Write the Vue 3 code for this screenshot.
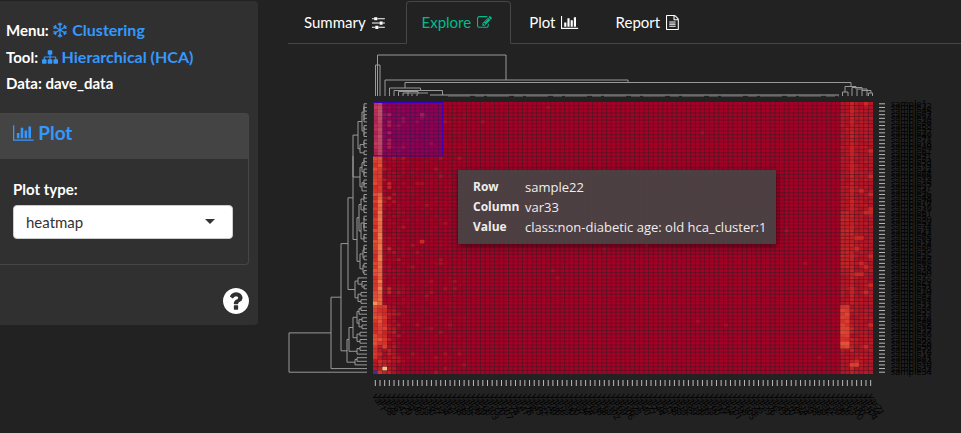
<script setup>
import { ref } from 'vue'

const icons = {
  bars: { box: '0 0 2048 1792', d: 'M640 896v512H384V896h256zm384-512v1024H768V384h256zm1024 1152v128H0V128h128v1408h1920zm-640-896v768h-256V640h256zm384-384v1152h-256V256h256z' },
  edit: { box: '0 0 1792 1792', d: 'M888 1184l116-116-152-152-116 116v56h96v96h56zm440-720q-16-16-33 1l-350 350q-17 17-1 33t33-1l350-350q17-17 1-33zm80 594v190q0 119-84.5 203.5t-203.5 84.5h-832q-119 0-203.5-84.5t-84.5-203.5v-832q0-119 84.5-203.5t203.5-84.5h832q63 0 117 25 15 7 18 23 3 17-9 29l-49 49q-14 14-32 8-23-6-45-6h-832q-66 0-113 47t-47 113v832q0 66 47 113t113 47h832q66 0 113-47t47-113v-126q0-13 9-22l64-64q15-15 35-7t20 29zm-96-738l288 288-672 672h-288v-288zm444 132l-92 92-288-288 92-92q28-28 68-28t68 28l152 152q28 28 28 68t-28 68z' },
  file: { box: '128 0 1536 1792', d: 'M1596 380q28 28 48 76t20 88v1152q0 40-28 68t-68 28h-1344q-40 0-68-28t-28-68v-1600q0-40 28-68t68-28h896q40 0 88 20t76 48zm-444-244v376h376q-10-29-22-41l-313-313q-12-12-41-22zm384 1528v-1024h-416q-40 0-68-28t-28-68v-416h-768v1536h1280zm-1024-864q0-14 9-23t23-9h704q14 0 23 9t9 23v64q0 14-9 23t-23 9h-704q-14 0-23-9t-9-23v-64zm736 224q14 0 23 9t9 23v64q0 14-9 23t-23 9h-704q-14 0-23-9t-9-23v-64q0-14 9-23t23-9h704zm0 256q14 0 23 9t9 23v64q0 14-9 23t-23 9h-704q-14 0-23-9t-9-23v-64q0-14 9-23t23-9h704z' },
  sliders: { box: '128 0 1536 1792', d: 'M480 1408v128h-352v-128h352zm352-128q26 0 45 19t19 45v256q0 26-19 45t-45 19h-256q-26 0-45-19t-19-45v-256q0-26 19-45t45-19h256zm160-384v128h-864v-128h864zm-640-512v128h-224v-128h224zm1312 1024v128h-736v-128h736zm-960-1152q26 0 45 19t19 45v256q0 26-19 45t-45 19h-256q-26 0-45-19t-19-45v-256q0-26 19-45t45-19h256zm640 512q26 0 45 19t19 45v256q0 26-19 45t-45 19h-256q-26 0-45-19t-19-45v-256q0-26 19-45t45-19h256zm320 128v128h-224v-128h224zm0-512v128h-864v-128h864z' },
  sitemap: { box: '0 0 1792 1792', d: 'M1792 1248v320q0 40-28 68t-68 28h-320q-40 0-68-28t-28-68v-320q0-40 28-68t68-28h96v-192h-512v192h96q40 0 68 28t28 68v320q0 40-28 68t-68 28h-320q-40 0-68-28t-28-68v-320q0-40 28-68t68-28h96v-192h-512v192h96q40 0 68 28t28 68v320q0 40-28 68t-68 28h-320q-40 0-68-28t-28-68v-320q0-40 28-68t68-28h96v-192q0-52 38-90t90-38h512v-192h-96q-40 0-68-28t-28-68v-320q0-40 28-68t68-28h320q40 0 68 28t28 68v320q0 40-28 68t-68 28h-96v192h512q52 0 90 38t38 90v192h96q40 0 68 28t28 68z' },
  help: { box: '128 128 1536 1536', d: 'M1024 1376v-192q0-14-9-23t-23-9h-192q-14 0-23 9t-9 23v192q0 14 9 23t23 9h192q14 0 23-9t9-23zm256-672q0-88-55.5-163t-138.5-116-170-41q-243 0-371 213-15 24 8 42l132 100q7 6 19 6 16 0 25-12 53-68 86-92 34-24 86-24 48 0 85.5 26t37.5 59q0 38-20 61t-68 45q-63 28-115.5 86.5t-52.5 125.5v36q0 14 9 23t23 9h192q14 0 23-9t9-23q0-19 21.5-49.5t54.5-49.5q32-18 49-28.5t46-35 44.5-48 28-60.5 12.5-81zm384 192q0 209-103 385.5t-279.5 279.5-385.5 103-385.5-103-279.5-279.5-103-385.5 103-385.5 279.5-279.5 385.5-103 385.5 103 279.5 279.5 103 385.5z' }
}

const tabs = [
  { name: 'Summary', icon: 'sliders' },
  { name: 'Explore', icon: 'edit' },
  { name: 'Plot', icon: 'bars' },
  { name: 'Report', icon: 'file' }
]
const active = ref('Explore')
const plotType = ref('heatmap')

// Heatmap geometry, in plot units
const COLS = 107
const ROWS = 75
const X0 = 85
const Y0 = 58
const W = 500
const H = 272
const cw = W / COLS
const ch = H / ROWS
const colX = i => X0 + (i + 0.5) * cw
const rowY = i => Y0 + (i + 0.5) * ch

let seed = 17
const rnd = () => {
  seed = (seed + 0x6d2b79f5) | 0
  let t = Math.imul(seed ^ (seed >>> 15), 1 | seed)
  t = (t + Math.imul(t ^ (t >>> 7), 61 | t)) ^ t
  return ((t ^ (t >>> 14)) >>> 0) / 4294967296
}

const stops = [[165, 0, 38], [215, 48, 39], [244, 109, 67], [253, 174, 97], [254, 224, 144]]
function shade(t) {
  const p = Math.min(3.999, t * 4)
  const i = Math.floor(p)
  const f = p - i
  return `rgb(${stops[i].map((c, k) => Math.round(c + (stops[i + 1][k] - c) * f)).join(',')})`
}

function intensity(r, c) {
  const n = rnd()
  if (c === 0) return r > 70 ? 0.12 : 0.24 + n * 0.2
  if (c === 1) {
    if (r < 15) return 0.42 + n * 0.12
    if (r < 25) return 0.3 + n * 0.14
    if (r < 56) return 0.48 + n * 0.18
    return r < 66 ? 0.28 + n * 0.18 : 0.12 + n * 0.2
  }
  if (c >= 100) {
    if (c < 102) {
      if (r >= 56 && r < 68) return 0.26 + n * 0.14
      return r > 29 && r < 46 ? 0.16 + n * 0.04 : 0.08 + n * 0.05
    }
    if (c === 102) return r < 56 ? 0.16 + n * 0.06 : 0.06 + n * 0.14
    return n > 0.92 ? 0.24 : 0.08 + n * 0.06
  }
  if (r >= 56 && c < 5) return c === 2 && r < 68 ? 0.2 + n * 0.16 : 0.05 + n * 0.12
  if (c === 3) return n > 0.8 ? 0.18 : n * 0.06
  if (c < 7) return n > 0.92 ? 0.09 : n * 0.04
  if (c < 20) return n > 0.96 ? 0.07 : n * 0.02
  return n > 0.998 ? 0.05 : 0
}

const special = { '74-0': '#313695', '73-2': '#fee090', '55-0': '#fdae61', '72-102': '#e34f36', '72-103': '#e34f36', '66-100': '#f0603c', '66-101': '#f0603c', '3-10': '#c5272a', '38-10': '#d73027' }
const cells = []
const hotCells = []
for (let r = 0; r < ROWS; r++) {
  for (let c = 0; c < COLS; c++) {
    const t = intensity(r, c)
    const mark = special[`${r}-${c}`]
    const fill = mark || (t > 0.015 ? shade(t) : null)
    if (fill) (mark || t > 0.2 ? hotCells : cells).push({ key: `${r}-${c}`, x: X0 + c * cw, y: Y0 + r * ch, fill })
  }
}

let grid = ''
for (let c = 1; c < COLS; c++) grid += `M${(X0 + c * cw).toFixed(1)} ${Y0}v${H}`
for (let r = 1; r < ROWS; r++) grid += `M${X0} ${(Y0 + r * ch).toFixed(1)}h${W}`

// Row dendrogram: every join returns its own centre line
const LEAF = 79
let rowTree = ''
function join(x, a, b) {
  rowTree += `M${a.x} ${a.y.toFixed(1)}H${x}V${b.y.toFixed(1)}H${b.x}`
  return { x, y: (a.y + b.y) / 2 }
}
const leaf = i => ({ x: LEAF, y: rowY(i) })
function branch(lo, hi, x) {
  if (lo === hi) return leaf(lo)
  const n = hi - lo
  const cut = lo + Math.min(n - 1, Math.floor(n * (0.3 + rnd() * 0.4)))
  const next = Math.min(LEAF - 3, x + 2 + Math.round(rnd() * 2))
  return join(x, branch(lo, cut, next), branch(cut + 1, hi, next))
}
const upper = join(65, join(70, branch(0, 9, 74), branch(10, 14, 72)), branch(15, 24, 72))
const middle = join(69, branch(25, 38, 71), branch(39, 47, 72))
const large = join(60, join(65, upper, middle), branch(48, 55, 67))
const lower = join(59, join(61, branch(56, 66, 65), branch(67, 69, 69)), branch(70, 72, 67))
join(1, join(43, join(53, large, lower), leaf(73)), leaf(74))

const columnTree = 'M89.5 52V11H218V36M87.5 52V21H92V52M97 52V36H340V38M117 44V38.500H563V42' +
  'M101.500 52V44H132.500V46M106 52V46.500H154.500V51M110.500 52V47.500H130V50M115 52V49H140M120 52V48M124 52V50M129 52V50' +
  'M557 48V42.500H568V45M554.500 52V48H560V52M564 52V43.500H574V52M569 52V45H579V52M574 46.500H583V49M580.500 52V49H584.500V52'

const colTicks = Array.from({ length: COLS }, (_, i) => ({ x: colX(i), label: `var${((i * 37) % COLS) + 1}` }))
const rowTicks = Array.from({ length: ROWS }, (_, i) => ({ y: rowY(i), label: `sample${((i * 22) % ROWS) + 1}` }))
</script>

<template>
  <div class="page">
    <aside class="sidebar">
      <div class="crumbs">
        <p>Menu:
          <a href="#"><svg class="icon" viewBox="0 0 16 16" fill="none" stroke="currentColor" stroke-width="1.3" aria-hidden="true">
            <g v-for="a in [0, 60, 120, 180, 240, 300]" :key="a" :transform="`rotate(${a} 8 8)`"><path d="M8 8V.5M6 1.500L8 3.500l2-2" /></g>
          </svg> Clustering</a>
        </p>
        <p>Tool:
          <a href="#"><svg class="icon" :viewBox="icons.sitemap.box" aria-hidden="true"><path :d="icons.sitemap.d" /></svg> Hierarchical (HCA)</a>
        </p>
        <p>Data: dave_data</p>
      </div>
      <section class="panel">
        <h2><a href="#"><svg class="icon" :viewBox="icons.bars.box" aria-hidden="true"><path :d="icons.bars.d" /></svg> Plot</a></h2>
        <div class="panel-body">
          <label for="plot-type">Plot type:</label>
          <div class="select">
            <select id="plot-type" v-model="plotType">
              <option>heatmap</option>
              <option>dendrogram</option>
            </select>
            <span class="caret"></span>
          </div>
        </div>
      </section>
      <button class="help" type="button" aria-label="Help">
        <svg :viewBox="icons.help.box" aria-hidden="true"><path :d="icons.help.d" /></svg>
      </button>
    </aside>

    <main>
      <nav class="tabs">
        <a v-for="t in tabs" :key="t.name" href="#" :class="{ active: t.name === active }" @click.prevent="active = t.name">
          <span>{{ t.name }}</span>
          <svg class="icon" :viewBox="icons[t.icon].box" aria-hidden="true"><path :d="icons[t.icon].d" /></svg>
        </a>
      </nav>
      <div class="plot">
        <svg class="chart" viewBox="0 0 673 389">
          <path class="tree" :d="columnTree" />
          <path class="fringe" d="M142 51H551" />
          <path class="fringe dim" d="M160 52H551" />
          <path class="tree" :d="rowTree" />
          <rect :x="X0" :y="Y0" :width="W" :height="H" fill="#a50026" />
          <rect v-for="c in cells" :key="c.key" :x="c.x" :y="c.y" :width="cw" :height="ch" :fill="c.fill" />
          <path class="grid" :d="grid" />
          <g class="hot">
            <rect v-for="c in hotCells" :key="c.key" :x="c.x" :y="c.y" :width="cw" :height="ch" :fill="c.fill" />
          </g>
          <rect class="brush" :x="X0 + 0.5" :y="Y0 + 0.5" :width="cw * 15 - 1" :height="ch * 14.700" />
          <g v-for="t in colTicks" :key="t.label">
            <path class="tick" :d="`M${t.x} 336v6`" />
            <text :x="t.x - 3" y="352" :transform="`rotate(60 ${t.x - 3} 352)`">{{ t.label }}</text>
          </g>
          <g v-for="t in rowTicks" :key="t.label">
            <path class="tick" :d="`M591 ${t.y}h6`" />
            <text x="603" :y="t.y + 3">{{ t.label }}</text>
          </g>
        </svg>
        <dl class="tip">
          <dt>Row</dt><dd>sample22</dd>
          <dt>Column</dt><dd>var33</dd>
          <dt>Value</dt><dd>class:non-diabetic age: old hca_cluster:1</dd>
        </dl>
      </div>
    </main>
  </div>
</template>

<style>
body {
  background: #222;
}
</style>

<style scoped>
.page {
  display: grid;
  grid-template-columns: 258px minmax(0, 1fr);
  gap: 30px;
  align-items: start;
  padding-top: 1px;
  font: 15px/21px Lato, "Liberation Sans", sans-serif;
  color: #fff;
}
a {
  color: #3498ff;
  text-decoration: none;
}
.icon {
  height: 16px;
  fill: currentColor;
  vertical-align: -2px;
}
.icon[fill="none"] {
  fill: none;
}
.sidebar {
  display: flex;
  flex-direction: column;
  box-sizing: border-box;
  padding: 18px 9px 11px 0;
  background: #303030;
  border-radius: 0 4px 4px 0;
}
.crumbs {
  padding-left: 6px;
  font-weight: 700;
}
.crumbs p {
  margin: 0 0 5px;
}
.crumbs a {
  font-size: 16px;
}
.panel {
  margin-top: 14px;
  border: 1px solid #464646;
  border-left: 0;
  border-radius: 0 4px 4px 0;
}
.panel h2 {
  margin: 0;
  padding: 7px 13px 14px;
  background: #444;
  font-size: 19px;
  line-height: 24px;
  font-weight: 700;
}
.panel h2 .icon {
  height: 18px;
}
.panel-body {
  padding: 20px 15px 25px 13px;
}
label {
  display: block;
  margin-bottom: 5px;
  font-weight: 700;
}
.select {
  position: relative;
}
select {
  display: block;
  width: 100%;
  height: 34px;
  padding: 0 12px;
  appearance: none;
  border: 1px solid #ccc;
  border-radius: 4px;
  background: #fff;
  color: #333;
  font: inherit;
}
.caret {
  position: absolute;
  right: 18px;
  top: 14px;
  border: 5px solid transparent;
  border-top-color: #333;
  border-bottom: 0;
}
.help {
  align-self: flex-end;
  width: 26px;
  height: 26px;
  margin-top: 23px;
  padding: 0;
  border: 0;
  background: none;
}
.help svg {
  display: block;
  fill: #fff;
}
.tabs {
  display: flex;
  gap: 2px;
  border-bottom: 1px solid #464646;
}
.tabs a {
  display: flex;
  align-items: center;
  gap: 6px;
  margin-bottom: -1px;
  padding: 10px 18px 10px 15px;
  border: 1px solid transparent;
  border-radius: 4px 4px 0 0;
  color: #fff;
}
.tabs .icon {
  height: 15px;
}
.tabs a.active {
  border-color: #464646;
  border-bottom-color: #222;
  color: #00bc8c;
}
.plot {
  position: relative;
}
.chart {
  display: block;
  width: 100%;
}
.tree {
  fill: none;
  stroke: #999;
}
.fringe {
  stroke: #a0a0a0;
  stroke-width: 1;
}
.dim {
  stroke: #777;
  stroke-dasharray: 22 5 9 3;
}
.grid {
  stroke: #222;
  stroke-opacity: 0.42;
}
.hot {
  fill-opacity: 0.85;
}
.brush {
  fill: #3000ff;
  fill-opacity: 0.2;
  stroke: #3a00c0;
}
.tick {
  stroke: #bbb;
}
.chart text {
  font: 9px "Open Sans", sans-serif;
  fill: #000;
}
.tip {
  position: absolute;
  left: 170px;
  top: 126px;
  display: grid;
  grid-template-columns: 49px auto;
  column-gap: 3px;
  margin: 0;
  padding: 7px 10px 7px 15px;
  background: rgba(74, 66, 68, 0.96);
  box-shadow: 1px 2px 6px rgba(0, 0, 0, 0.5);
  color: #eee;
  font: 13px/20px "Open Sans", "Noto Sans", sans-serif;
  white-space: nowrap;
}
.tip dt {
  font-size: 12px;
  font-weight: 700;
}
.tip dd {
  margin: 0;
}
</style>
